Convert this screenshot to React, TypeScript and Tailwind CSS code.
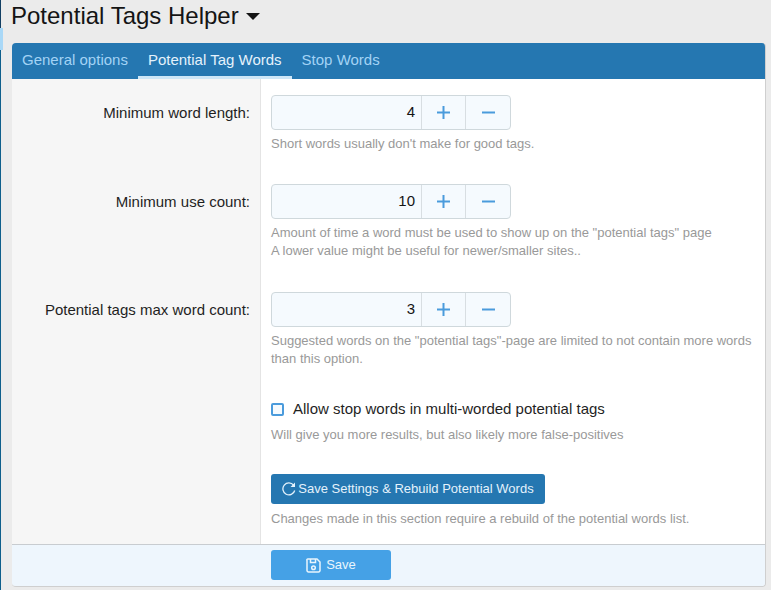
function Stepper({ value }: { value: string }) {
  return (
    <div className="flex h-[35px] w-[240px] rounded-[4px] border border-[#cfd8dc] bg-[#f5fafe]">
      <div className="flex w-[150px] items-center justify-end border-r border-[#d8dee2] pr-[6px] text-[15px] text-[#141414]">
        {value}
      </div>
      <button className="flex w-[44px] items-center justify-center border-r border-[#d8dee2] text-[#4a9bdc]">
        <svg width="13" height="13" viewBox="0 0 13 13">
          <path d="M5.5 0h2v5.5H13v2H7.5V13h-2V7.5H0v-2h5.5z" fill="currentColor" />
        </svg>
      </button>
      <button className="flex flex-1 items-center justify-center text-[#4a9bdc]">
        <svg width="13" height="13" viewBox="0 0 13 13">
          <path d="M0 5.5h13v2H0z" fill="currentColor" />
        </svg>
      </button>
    </div>
  );
}

function Row({
  label,
  value,
  height,
  children,
}: {
  label: string;
  value: string;
  height: string;
  children: React.ReactNode;
}) {
  return (
    <div className={`flex ${height}`}>
      <div className="w-[249px] shrink-0 border-r border-[#e4e4e4] bg-[#f6f6f6] pr-[10px] pt-[24px] text-right text-[15px] leading-[20px] text-[#1f1f1f]">
        {label}
      </div>
      <div className="flex-1 bg-white pl-[10px] pt-[16px]">
        <Stepper value={value} />
        <p className="mt-[5px] text-[13px] leading-[18px] text-[#999999]">{children}</p>
      </div>
    </div>
  );
}

export default function App() {
  return (
    <div
      className="relative h-[590px] w-[771px] overflow-hidden bg-[#ebebeb] pl-[12px] pr-[5px]"
      style={{ fontFamily: '"Liberation Sans", Arial, sans-serif' }}
    >
      {/* sliver of the page behind, along the left edge */}
      <div className="absolute left-0 top-0 flex h-[590px] flex-col">
        <div className="h-[28px] w-[1px] bg-[#123f63]" />
        <div className="h-[22px] w-[3px] bg-[#a9d8f7]" />
        <div className="flex-1 w-[1px] bg-[#0f5f8c]" />
      </div>
      <h1 className="flex h-[43px] items-start pt-[1px] text-[24px] leading-[30px] -ml-[1px] text-[#141414]">
        Potential Tags Helper
        <span className="ml-[7px] mt-[12px] h-0 w-0 border-x-[7px] border-t-[7px] border-x-transparent border-t-[#141414]" />
      </h1>
      <div className="overflow-hidden rounded-[4px] border-r border-b border-[#cfcfcf]">
        <div className="flex h-[36px] items-stretch gap-0 bg-[#2577b1] pl-[10px] text-[15px]">
          <a className="flex items-center pb-[2px] text-[#a3d3f5]">General options</a>
          <a className="ml-[10px] flex items-center border-b-[3px] border-[#cde6f7] px-[10px] pt-[1px] text-[#e4f2fc]">
            Potential Tag Words
          </a>
          <a className="ml-[10px] flex items-center pb-[2px] text-[#a3d3f5]">Stop Words</a>
        </div>

        <Row label="Minimum word length:" value="4" height="h-[89px]">
          Short words usually don't make for good tags.
        </Row>
        <Row label="Minimum use count:" value="10" height="h-[108px]">
          Amount of time a word must be used to show up on the "potential tags" page
          <br />
          A lower value might be useful for newer/smaller sites..
        </Row>
        <Row label="Potential tags max word count:" value="3" height="h-[112px]">
          Suggested words on the "potential tags"-page are limited to not contain more words than this option.
        </Row>

        <div className="flex h-[83px]">
          <div className="w-[249px] shrink-0 border-r border-[#e4e4e4] bg-[#f6f6f6]" />
          <div className="flex-1 bg-white pl-[10px] pt-[11px]">
            <label className="flex items-center text-[15px] leading-[20px] text-[#1f1f1f]">
              <span className="mr-[9px] h-[13px] w-[13px] rounded-[2px] border-2 border-[#4a9bdc] bg-[#f5fafe]" />
              Allow stop words in multi-worded potential tags
            </label>
            <p className="mt-[7px] text-[13px] leading-[18px] text-[#999999]">
              Will give you more results, but also likely more false-positives
            </p>
          </div>
        </div>

        <div className="flex h-[73px]">
          <div className="w-[249px] shrink-0 border-r border-[#e4e4e4] bg-[#f6f6f6]" />
          <div className="flex-1 bg-white pl-[10px] pt-[3px]">
            <button className="flex h-[30px] w-[274px] items-center justify-center rounded-[3px] bg-[#2577b1] text-[13px] text-[#e4f2fc]">
              <svg width="14" height="14" viewBox="0 0 14 14" fill="none" className="mr-[2px]">
                <path d="M11.600 3.200A6 6 0 1 0 12.700 8.500" stroke="currentColor" strokeWidth="1.300" />
                <path d="M13 0.500V5H8.500z" fill="currentColor" />
              </svg>
              Save Settings &amp; Rebuild Potential Words
            </button>
            <p className="mt-[6px] text-[13px] leading-[18px] text-[#999999]">
              Changes made in this section require a rebuild of the potential words list.
            </p>
          </div>
        </div>

        <div className="flex h-[42px] border-t border-[#c8ccd0] bg-[#eef6fd] pl-[259px] pt-[5px]">
          <button className="flex h-[30px] w-[120px] items-center justify-center rounded-[3px] bg-[#45a1e6] text-[13px] text-[#e9f5fd]">
            <svg width="15" height="15" viewBox="0 0 15 15" fill="none" stroke="currentColor" strokeWidth="1.500" className="mr-[5px]">
              <path d="M2 1h9l3 3v8.500a1.500 1.500 0 0 1-1.500 1.500h-10a1.500 1.500 0 0 1-1.500-1.500v-10a1 1 0 0 1 1-1.500z" />
              <path d="M4.500 1v3.500h5V1" />
              <circle cx="7.500" cy="9.800" r="1.800" />
            </svg>
            Save
          </button>
        </div>
      </div>
    </div>
  );
}
